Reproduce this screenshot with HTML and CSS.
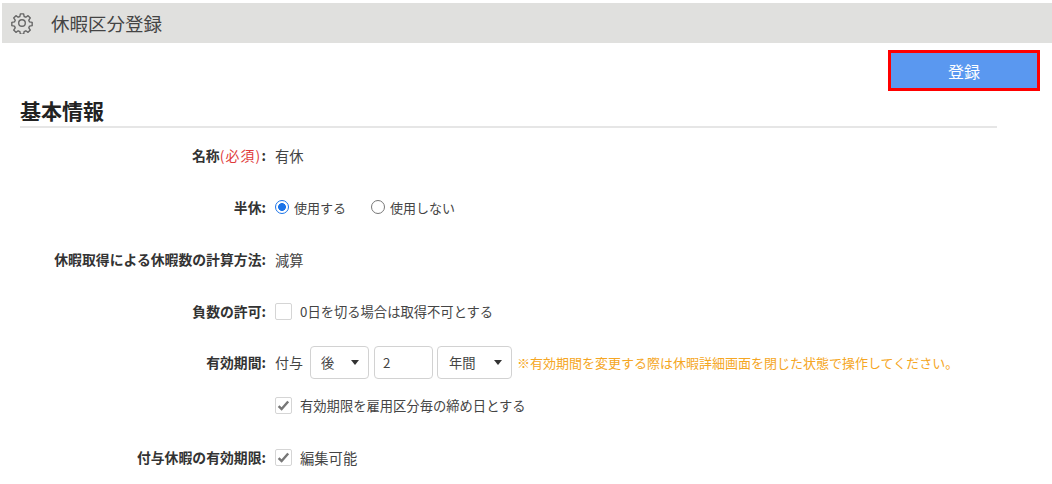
FILE: index.html
```html
<!DOCTYPE html>
<html lang="ja">
<head>
<meta charset="utf-8">
<title>休暇区分登録</title>
<link rel="stylesheet" href="styles.css">
</head>
<body>
<header class="titlebar">
  <svg class="gear" viewBox="0 0 24 24" width="22" height="22" fill="none" stroke="#666" stroke-width="1.5" stroke-linejoin="round">
    <circle cx="12" cy="12" r="3.6"/>
    <path d="M10.2 2h3.6l.5 2.9 1.9.8 2.4-1.7 2.5 2.5-1.7 2.4.8 1.9 2.9.5v3.6l-2.9.5-.8 1.9 1.7 2.4-2.5 2.5-2.4-1.7-1.9.8-.5 2.9h-3.6l-.5-2.9-1.9-.8-2.4 1.7-2.5-2.5 1.7-2.4-.8-1.9-2.9-.5v-3.6l2.9-.5.8-1.9-1.7-2.4 2.5-2.5 2.4 1.7 1.9-.8z"/>
  </svg>
  <h1 class="title">休暇区分登録</h1>
</header>
<div class="actions"><button class="submit" type="button">登録</button></div>
<section class="section">
  <h2 class="section-title">基本情報</h2>
  <div class="form">
    <div class="row">
      <div class="label">名称<span class="req">(必須)</span>:</div>
      <div class="value large">有休</div>
    </div>
    <div class="row">
      <div class="label">半休:</div>
      <div class="value">
        <span class="radio on"></span><span class="radio-text">使用する</span>
        <span class="radio second"></span><span class="radio-text">使用しない</span>
      </div>
    </div>
    <div class="row">
      <div class="label">休暇取得による休暇数の計算方法:</div>
      <div class="value large">減算</div>
    </div>
    <div class="row">
      <div class="label">負数の許可:</div>
      <div class="value"><span class="check"></span><span class="check-text">0日を切る場合は取得不可とする</span></div>
    </div>
    <div class="row row-period">
      <div class="label">有効期間:</div>
      <div class="value">
        <span class="prefix">付与</span>
        <span class="field sel-after">後<i class="caret"></i></span>
        <span class="field num">2</span>
        <span class="field sel-unit">年間<i class="caret"></i></span>
        <span class="note">※有効期間を変更する際は休暇詳細画面を閉じた状態で操作してください。</span>
      </div>
    </div>
    <div class="row row-sub">
      <div class="label"></div>
      <div class="value"><span class="check"><svg viewBox="0 0 16 16" width="15" height="15"><path d="M2.8 8.6l3.2 3.2 7-8" fill="none" stroke="#777" stroke-width="2.6"/></svg></span><span class="check-text">有効期限を雇用区分毎の締め日とする</span></div>
    </div>
    <div class="row row-last">
      <div class="label">付与休暇の有効期限:</div>
      <div class="value large"><span class="check"><svg viewBox="0 0 16 16" width="15" height="15"><path d="M2.8 8.6l3.2 3.2 7-8" fill="none" stroke="#777" stroke-width="2.6"/></svg></span><span class="check-text">編集可能</span></div>
    </div>
  </div>
</section>
</body>
</html>
```
FILE: styles.css
```css
* { box-sizing: border-box; }
html, body { margin: 0; padding: 0; background: #fff; }
body {
  height: 484px;
  overflow: hidden;
  font-family: "Noto Sans CJK JP", "Noto Sans", sans-serif;
  font-size: 13.3px;
  color: #444;
}
.titlebar {
  margin: 3px 0 0 2px;
  height: 40px;
  background: #e0e0de;
  display: flex;
  align-items: center;
  padding-left: 9px;
}
.gear { flex: none; }
.title {
  margin: 0 0 0 18px;
  font-size: 18.5px;
  line-height: 24px;
  font-weight: 400;
  color: #444;
}
.actions {
  display: flex;
  justify-content: flex-end;
  padding: 7px 12px 0 0;
}
.submit {
  width: 152px;
  height: 41px;
  border: 3px solid #f00;
  background: #5a98f0;
  color: #fff;
  font: inherit;
  font-size: 16px;
  padding: 0;
}
.section { margin: 5px 55px 0 20px; }
.section-title {
  margin: 0;
  height: 32px;
  font-size: 21px;
  line-height: 28px;
  font-weight: 700;
  color: #222;
  border-bottom: 2px solid #e6e6e6;
}
.form { padding-top: 14px; }
.row {
  display: flex;
  align-items: center;
  height: 26px;
  margin-bottom: 26px;
}
.row-period { height: 34px; margin-top: -5px; margin-bottom: 13px; }
.row-sub { margin-bottom: 26px; }
.label {
  width: 246px;
  text-align: right;
  font-size: 13.85px;
  font-weight: 700;
  color: #333;
  flex: none;
}
.req { color: #e03a3a; font-weight: 400; letter-spacing: 1.2px; }
.value {
  margin-left: 9px;
  display: flex;
  align-items: center;
  white-space: nowrap;
}
.value.large { font-size: 14.3px; }
.radio {
  width: 14px;
  height: 14px;
  border-radius: 50%;
  border: 1.5px solid #777;
  background: #fff;
  flex: none;
}
.radio.on {
  border: 1.5px solid #1a73e8;
  background: radial-gradient(circle, #1a73e8 0 3.6px, #fff 4.2px);
}
.radio.second { margin-left: 25px; }
.radio-text { margin-left: 5px; font-size: 13px; }
.check {
  width: 17px;
  height: 17px;
  border: 1px solid #d5d5d5;
  border-radius: 2px;
  background: #fff;
  flex: none;
  display: flex;
  align-items: center;
  justify-content: center;
}
.check-text { margin-left: 8px; }
.prefix { margin-right: 7px; font-size: 14px; }
.field {
  height: 33px;
  border: 1px solid #d2d2d2;
  border-radius: 4px;
  display: flex;
  align-items: center;
  position: relative;
  color: #444;
  background: #fff;
}
.sel-after { width: 59px; padding-left: 10px; }
.num { width: 59px; padding-left: 8px; margin-left: 5px; }
.sel-unit { width: 75px; padding-left: 11px; margin-left: 4px; }
.caret {
  position: absolute;
  right: 9px;
  top: 13px;
  border-style: solid;
  border-width: 5px 4px 0;
  border-color: #333 transparent transparent;
}
.note { margin-left: 5px; color: #f5a623; font-size: 13px; }
```
